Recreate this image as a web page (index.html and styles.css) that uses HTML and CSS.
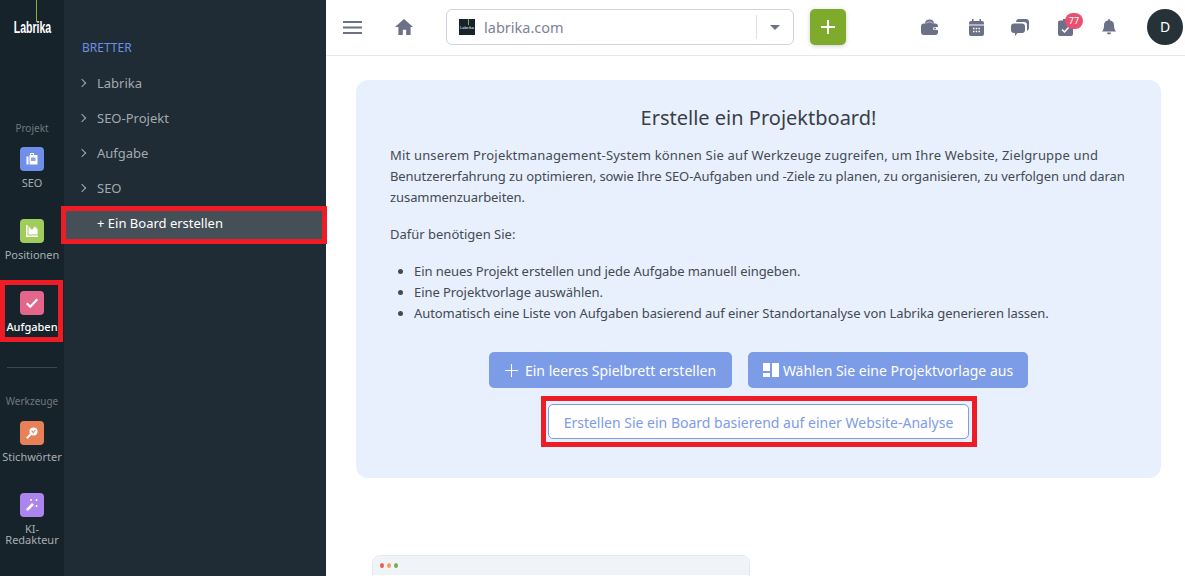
FILE: index.html
```html
<!DOCTYPE html>
<html lang="de">
<head>
    <meta charset="UTF-8">
    <title>Labrika</title>
    <link rel="stylesheet" href="styles.css">
</head>
<body>
    <div class="rail">
        <div class="logo"><span class="logo-line"></span><span class="logo-text">Labrika</span></div>
        <div class="rail-title">Projekt</div>
        <a class="rail-item">
            <span class="rail-icon blue">
                <svg viewBox="0 0 14 14" width="14" height="14"><path fill="#fff" d="M5 3V1h4v2h3.500v9.500h-8V3zM6 2v1h2V2zM1.500 4.500h2v8h-2z"/><rect x="6" y="5.500" width="4.500" height="3.500" fill="#8aa5ec"/></svg>
            </span>
            SEO
        </a>
        <a class="rail-item">
            <span class="rail-icon green">
                <svg viewBox="0 0 14 14" width="14" height="14"><path fill="#fff" d="M1 1h1.500v10.500H13V13H1z"/><path fill="#fff" d="M3.500 10.500V2L7 6l2.500-3.500L12.500 5v5.500z"/></svg>
            </span>
            Positionen
        </a>
        <a class="rail-item active">
            <span class="rail-icon pink">
                <svg viewBox="0 0 14 14" width="14" height="14"><path fill="none" stroke="#fff" stroke-width="2.200" d="M1.800 7.300l3.500 3.400 7-7.400"/></svg>
            </span>
            Aufgaben
        </a>
        <div class="rail-line"></div>
        <div class="rail-title tools">Werkzeuge</div>
        <a class="rail-item">
            <span class="rail-icon orange">
                <svg viewBox="0 0 14 14" width="14" height="14"><circle cx="8.500" cy="5.500" r="4" fill="#fff"/><path stroke="#fff" stroke-width="2" d="M5.500 8.500L1.800 12.200"/><path fill="none" stroke="#e9845c" stroke-width="1.100" d="M6.700 4.500l1.600 2.300 2-3"/></svg>
            </span>
            Stichwörter
        </a>
        <a class="rail-item two-lines">
            <span class="rail-icon purple">
                <svg viewBox="0 0 14 14" width="14" height="14"><path stroke="#fff" stroke-width="2.600" d="M1.800 12.200L8 6"/><path stroke="#fff" d="M6 1v2M5 2h2M11.500 1v2M10.500 2h2M11.500 7v2M10.500 8h2"/></svg>
            </span>
            KI-<br>Redakteur
        </a>
    </div>

    <div class="panel">
        <div class="panel-title">BRETTER</div>
        <ul class="board-list">
            <li><span class="chevron"></span>Labrika</li>
            <li><span class="chevron"></span>SEO-Projekt</li>
            <li><span class="chevron"></span>Aufgabe</li>
            <li><span class="chevron"></span>SEO</li>
            <li class="add-board">+ Ein Board erstellen</li>
        </ul>
    </div>

    <div class="main">
        <div class="topbar">
            <svg class="burger" viewBox="0 0 19 13" width="19" height="13"><path stroke="#6b7186" stroke-width="1.800" d="M0 1h19M0 6.500h19M0 12h19"/></svg>
            <svg class="home" viewBox="0 0 18 16" width="18" height="16"><path fill="#6b7186" d="M9 0l9 8h-2.400v8h-4.400v-5.200H7.800V16H3.400V8H0z"/></svg>
            <div class="site-select">
                <span class="site-logo"><i></i>Labrika</span>
                <span class="site-name">labrika.com</span>
                <span class="select-sep"></span>
                <span class="select-arrow"></span>
            </div>
            <button class="add-btn">
                <svg viewBox="0 0 14 14" width="14" height="14"><path stroke="#fff" stroke-width="2" d="M7 0v14M0 7h14"/></svg>
            </button>
            <div class="top-icons">
                <svg viewBox="0 0 17 16" width="17" height="16"><path fill="#6b7186" d="M4 4.500C4 2 6 .5 8.500 .5S13 2 13 4.500h1a3 3 0 0 1 3 3V13a3 3 0 0 1-3 3H3a3 3 0 0 1-3-3V7.500a3 3 0 0 1 3-3z"/><path fill="none" stroke="#c9ccd6" d="M5 4.500c1-2 6-2 7 0"/><path fill="#fff" d="M13.500 8h3.500v3h-3.500a1.500 1.500 0 0 1 0-3z"/><circle cx="14" cy="9.500" r="1" fill="#6b7186"/></svg>
                <svg class="calendar" viewBox="0 0 15 17" width="15" height="17"><path fill="#6b7186" d="M3 0h1.500v2h6V0H12v2h1A2 2 0 0 1 15 4v1.500H0V4a2 2 0 0 1 2-2h1zM0 6.500h15V15a2 2 0 0 1-2 2H2a2 2 0 0 1-2-2z"/><path stroke="#fff" stroke-width="1.500" stroke-dasharray="1.500 1.200" d="M4 9.500h7.500M4 12.500h7.500"/></svg>
                <svg viewBox="0 0 18 17" width="18" height="17"><path fill="#6b7186" d="M8 0h7a3 3 0 0 1 3 3v6a3 3 0 0 1-2 2.800V6a3 3 0 0 0-3-3H5a3 3 0 0 1 3-3z"/><path fill="#6b7186" d="M3 4.500h8a3 3 0 0 1 3 3V11a3 3 0 0 1-3 3H6.500L4 17v-3H3a3 3 0 0 1-3-3V7.500a3 3 0 0 1 3-3z"/></svg>
                <span class="task-icon">
                    <svg viewBox="0 0 15 17" width="15" height="17"><path fill="#6b7186" d="M2 1.500h3V0h5v1.500h3A2 2 0 0 1 15 3.500V15a2 2 0 0 1-2 2H2a2 2 0 0 1-2-2V3.500a2 2 0 0 1 2-2z"/><path fill="none" stroke="#fff" stroke-width="1.500" d="M4 10.500l2.500 2.500 4.500-5"/></svg>
                    <span class="badge">77</span>
                </span>
                <svg viewBox="0 0 14 16" width="14" height="16"><path fill="#6b7186" d="M7 0a1 1 0 0 1 1 1v.6A4.800 4.800 0 0 1 12 6.500c0 3.500 1 4.700 2 6H0c1-1.300 2-2.500 2-6A4.800 4.800 0 0 1 6 1.600V1a1 1 0 0 1 1-1zM5 13.500h4A2 2 0 0 1 5 13.500z"/></svg>
            </div>
            <div class="avatar">D</div>
        </div>

        <div class="content">
            <div class="intro-card">
                <h2>Erstelle ein Projektboard!</h2>
                <p class="lead">Mit unserem Projektmanagement-System können Sie auf Werkzeuge zugreifen, um Ihre Website, Zielgruppe und Benutzererfahrung zu optimieren, sowie Ihre SEO-Aufgaben und -Ziele zu planen, zu organisieren, zu verfolgen und daran zusammenzuarbeiten.</p>
                <p>Dafür benötigen Sie:</p>
                <ul>
                    <li>Ein neues Projekt erstellen und jede Aufgabe manuell eingeben.</li>
                    <li>Eine Projektvorlage auswählen.</li>
                    <li>Automatisch eine Liste von Aufgaben basierend auf einer Standortanalyse von Labrika generieren lassen.</li>
                </ul>
                <div class="card-buttons">
                    <button class="btn">
                        <svg viewBox="0 0 13 13" width="13" height="13"><path stroke="#fff" d="M6.500 0v13M0 6.500h13"/></svg>
                        Ein leeres Spielbrett erstellen
                    </button>
                    <button class="btn template">
                        <svg viewBox="0 0 16 14" width="16" height="14"><path fill="#fff" d="M0 0h7v8H0zM0 10h7v4H0zM9 0h7v14H9z"/></svg>
                        Wählen Sie eine Projektvorlage aus
                    </button>
                </div>
                <div class="highlight">
                    <button class="btn-outline">Erstellen Sie ein Board basierend auf einer Website-Analyse</button>
                </div>
            </div>
            <div class="preview">
                <div class="preview-bar"><i class="dot red"></i><i class="dot amber"></i><i class="dot lime"></i></div>
            </div>
        </div>
    </div>
</body>
</html>
```

FILE: styles.css
```css
* {
    box-sizing: border-box;
}
html, body {
    height: 100%;
}
body {
    margin: 0;
    display: flex;
    height: 576px;
    overflow: hidden;
    font-family: "Noto Sans", Arial, sans-serif;
    background: #fff;
}

/* left icon rail */
.rail {
    width: 64px;
    flex-shrink: 0;
    background: #17232b;
    color: #a7adb3;
    text-align: center;
}
.logo {
    height: 121px;
    display: flex;
    flex-direction: column;
    align-items: center;
}
.logo-line {
    width: 1px;
    height: 22px;
    background: #8fae3a;
    margin-left: 9px;
}
.logo-text {
    font-family: "Liberation Sans", Arial, sans-serif;
    font-size: 16px;
    font-weight: 700;
    line-height: 11px;
    color: #fff;
    transform: scaleX(.66);
}
.rail-title {
    font-size: 10px;
    line-height: 14px;
    color: #6f777d;
    margin-bottom: 12px;
}
.rail-title.tools {
    margin-bottom: 13px;
}
.rail-item {
    display: block;
    height: 72px;
    font-size: 11px;
    line-height: 11px;
}
.rail-item.active {
    color: #fff;
    font-weight: 500;
    position: relative;
}
.rail-item.active::after {
    content: "";
    position: absolute;
    left: 0;
    top: -11px;
    width: 63px;
    height: 62px;
    box-sizing: border-box;
    border: 5px solid #ee1c25;
}
.rail-icon {
    display: flex;
    align-items: center;
    justify-content: center;
    width: 24px;
    height: 24px;
    margin: 0 auto 6px;
    border-radius: 4px;
}
.rail-icon.blue { background: #6f8fe8; }
.rail-icon.green { background: #a0cc5b; }
.rail-icon.pink { background: #e4668a; }
.rail-icon.orange { background: #e88158; }
.rail-icon.purple { background: #ab84ee; }
.rail-line {
    height: 1px;
    width: 50px;
    margin: 4px auto 26px;
    background: #3b464d;
}

/* boards panel */
.panel {
    width: 262px;
    flex-shrink: 0;
    background: #1f2c35;
    padding-top: 40px;
}
.panel-title {
    padding-left: 18px;
    font-size: 12px;
    line-height: 16px;
    color: #6c8fe4;
    margin-bottom: 9px;
}
.board-list {
    list-style: none;
    margin: 0;
    padding: 0;
}
.board-list li {
    height: 35px;
    display: flex;
    align-items: center;
    padding-left: 33px;
    position: relative;
    font-size: 13px;
    color: #a3a9ae;
}
.chevron {
    position: absolute;
    left: 15px;
    top: 15px;
    width: 6px;
    height: 6px;
    border-top: 1.5px solid #a3a9ae;
    border-right: 1.5px solid #a3a9ae;
    transform: rotate(45deg);
}
.board-list .add-board {
    color: #fff;
    height: 38px;
    margin: 1px -1px 0 -3px;
    padding: 0 0 4px 31px;
    background: #444f57;
    border: 5px solid #ee1c25;
}

/* main */
.main {
    flex: 1;
    min-width: 0;
}
.topbar {
    height: 56px;
    display: flex;
    align-items: center;
    padding: 0 0 1px 17px;
    border-bottom: 1px solid #e8e8e8;
}
.burger {
    margin-right: 33px;
}
.home {
    margin-right: 33px;
}
.site-select {
    width: 348px;
    height: 36px;
    display: flex;
    align-items: center;
    border: 1px solid #d1d1e0;
    border-radius: 6px;
    padding-left: 12px;
    margin-right: 16px;
}
.site-logo {
    width: 16px;
    height: 16px;
    background: #17232b;
    color: #fff;
    font-size: 4px;
    line-height: 5px;
    text-align: center;
    padding-top: 6px;
    overflow: hidden;
    position: relative;
    margin-right: 9px;
}
.site-logo i {
    position: absolute;
    left: 9px;
    top: 0;
    width: 1px;
    height: 6px;
    background: #8fae3a;
}
.site-name {
    flex: 1;
    font-size: 14.500px;
    color: #7d8295;
}
.select-sep {
    width: 1px;
    height: 24px;
    background: #e0e0e6;
}
.select-arrow {
    width: 0;
    height: 0;
    margin: 0 13px;
    border-left: 5px solid transparent;
    border-right: 5px solid transparent;
    border-top: 5px solid #6b7186;
}
.add-btn {
    width: 36px;
    height: 36px;
    padding: 0;
    border: 0;
    border-radius: 5px;
    background: #7eab2b;
    box-shadow: 0 1px 4px rgba(0, 0, 0, .2);
    display: flex;
    align-items: center;
    justify-content: center;
}
.top-icons {
    display: flex;
    align-items: center;
    gap: 29px;
    margin-left: 75px;
}
.calendar {
    margin: 0 -2px 0 2px;
}
.task-icon {
    position: relative;
    display: flex;
}
.badge {
    position: absolute;
    left: 7px;
    top: -6px;
    width: 18px;
    height: 16px;
    border-radius: 8px;
    background: #e9506f;
    color: #fff;
    font-size: 9px;
    line-height: 15px;
    text-align: center;
}
.avatar {
    width: 36px;
    height: 36px;
    margin-left: 31px;
    border-radius: 50%;
    background: #263238;
    color: #fff;
    font-size: 14px;
    line-height: 36px;
    text-align: center;
}
.content {
    padding: 24px 24px 0 30px;
}
.intro-card {
    width: 805px;
    height: 398px;
    padding: 24px 34px 0;
    border-radius: 12px;
    background: #e8f0fe;
    text-align: center;
}
.intro-card h2 {
    margin: 0 0 13px;
    font-size: 20px;
    font-weight: 400;
    line-height: 28px;
    color: #3a3f45;
}
.intro-card p {
    margin: 0 0 16px;
    font-size: 13px;
    line-height: 21px;
    color: #444a50;
    text-align: left;
}
.intro-card .lead {
    letter-spacing: -.08px;
}
.intro-card .lead::first-line {
    letter-spacing: .18px;
}
.intro-card ul {
    margin: 0 0 28px;
    padding-left: 24px;
    font-size: 13px;
    line-height: 21px;
    letter-spacing: -.07px;
    color: #444a50;
    text-align: left;
}
.card-buttons {
    display: flex;
    justify-content: center;
    gap: 16px;
    margin-bottom: 8px;
}
.btn {
    height: 36px;
    width: 243px;
    display: flex;
    align-items: center;
    justify-content: center;
    gap: 7px;
    border: 0;
    border-radius: 5px;
    background: #7d9ce8;
    color: #fff;
    font-family: inherit;
    font-size: 14px;
}
.btn.template {
    width: 280px;
    gap: 4px;
}
.highlight {
    width: 436px;
    height: 51px;
    margin: 0 auto;
    display: flex;
    align-items: center;
    justify-content: center;
    border: 5px solid #ee1c25;
}
.btn-outline {
    width: 421px;
    height: 35px;
    padding: 1px 0 0;
    border: 1px solid #7d9ce8;
    border-radius: 5px;
    background: #fff;
    color: #7d9ce8;
    font-family: inherit;
    font-size: 14px;
}
.preview {
    width: 378px;
    height: 40px;
    margin: 77px 0 0 16px;
    border: 1px solid #e4eaf2;
    border-radius: 8px 8px 0 0;
}
.preview-bar {
    height: 19px;
    display: flex;
    align-items: center;
    gap: 3px;
    padding-left: 7px;
    background: #f0f4f8;
    border-radius: 8px 8px 0 0;
}
.dot {
    width: 4px;
    height: 5px;
    border-radius: 50%;
}
.dot.red { background: #ee5a52; }
.dot.amber { background: #f4a24e; }
.dot.lime { background: #74ad5e; }
```
